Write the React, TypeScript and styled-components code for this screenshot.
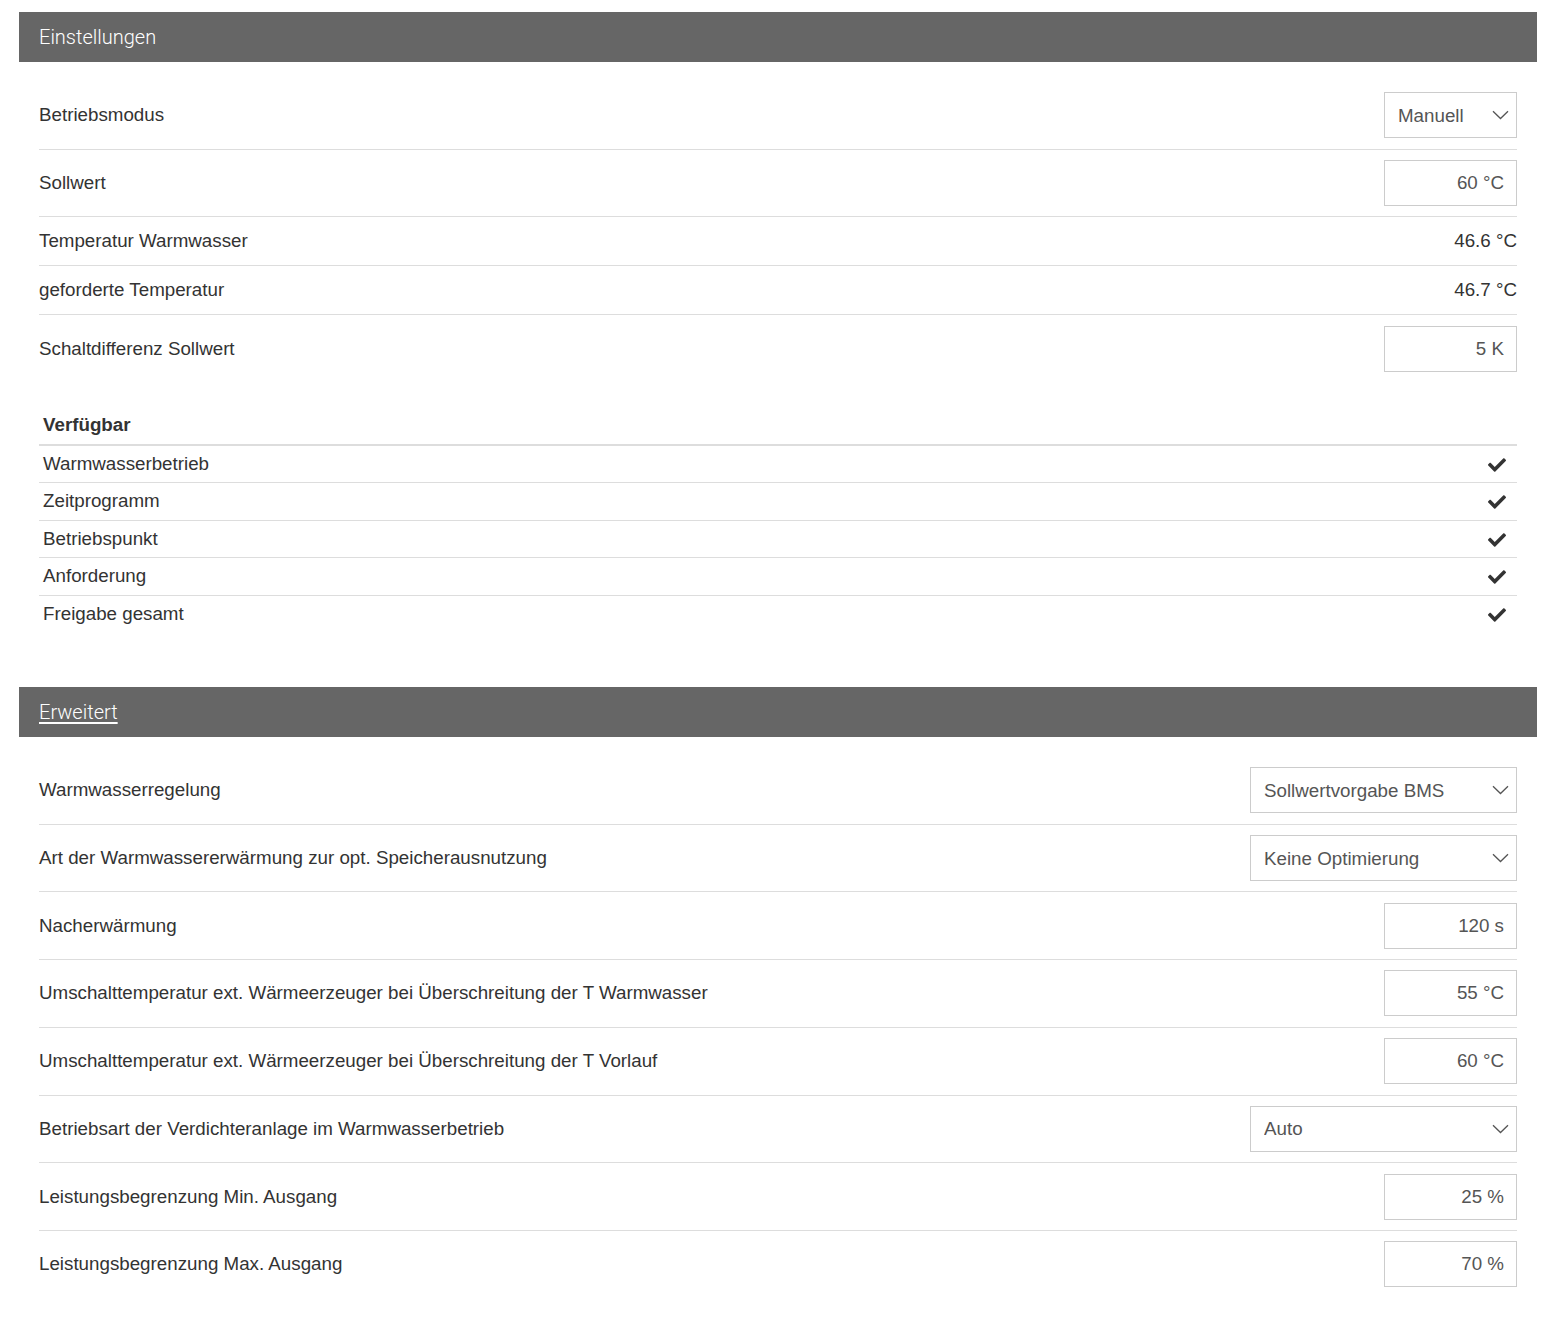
import React from "react";
import styled, { createGlobalStyle } from "styled-components";
import { FaCheck } from "react-icons/fa";

const GlobalStyle = createGlobalStyle`
  body {
    margin: 0;
    background: #fff;
    font-family: "Liberation Sans", Arial, sans-serif;
    color: #333;
  }
`;

const ScPage = styled.div`
  padding: 12px 17px 40px 19px;
`;

const ScSection = styled.section`
  display: block;
`;

const ScSectionHeader = styled.div`
  height: 50px;
  line-height: 50px;
  padding: 0 20px;
  background: #666;
  color: #fff;
  font-family: Roboto, "Liberation Sans", sans-serif;
  font-weight: 300;
  font-size: 20px;
`;

const ScHeaderLink = styled.a`
  color: #fff;
  text-decoration: underline;
  text-underline-offset: 3px;
  cursor: pointer;
`;

const ScBody = styled.div`
  padding: 20px 20px 0;
`;

const ScRow = styled.div<{ $plain?: boolean }>`
  display: flex;
  align-items: center;
  justify-content: space-between;
  padding: ${(p) => (p.$plain ? "12px 0" : "10.35px 0")};
  border-bottom: 1px solid #ddd;
  &:last-child {
    border-bottom: none;
  }
`;

const ScLabel = styled.span`
  font-size: 18.75px;
  line-height: 24px;
  color: #333;
`;

const ScValue = styled.span`
  font-size: 18.75px;
  line-height: 24px;
  color: #333;
`;

const ScInput = styled.input`
  box-sizing: border-box;
  width: 133px;
  height: 46px;
  border: 1px solid #ccc;
  border-radius: 0;
  padding: 0 12px;
  text-align: right;
  font-family: inherit;
  font-size: 18.75px;
  color: #555;
  background: #fff;
  outline: none;
`;

const ScSelectWrap = styled.div<{ $wide?: boolean }>`
  position: relative;
  width: ${(p) => (p.$wide ? 267 : 133)}px;
  height: 46px;
  svg {
    position: absolute;
    right: 8px;
    top: 18px;
    pointer-events: none;
  }
`;

const ScSelect = styled.select`
  box-sizing: border-box;
  width: 100%;
  height: 100%;
  appearance: none;
  border: 1px solid #ccc;
  border-radius: 0;
  padding: 0 36px 0 13px;
  font-family: inherit;
  font-size: 18.75px;
  color: #555;
  background: #fff;
  outline: none;
`;

const ScTable = styled.table`
  width: 100%;
  margin: 25px 0 55px;
  border-collapse: collapse;
  font-size: 18.75px;
  color: #333;
  th,
  td {
    padding: 6px 4px;
    line-height: 24.5px;
    text-align: left;
  }
  th {
    font-weight: bold;
    border-bottom: 2px solid #ddd;
  }
  td {
    border-top: 1px solid #ddd;
  }
  tbody tr:first-child td {
    border-top: none;
  }
`;

const ScCheckCell = styled.td`
  width: 40px;
  && {
    text-align: right;
    padding-right: 11px;
  }
  svg {
    display: inline-block;
    vertical-align: middle;
    color: #333;
  }
`;

const Chevron = () => (
  <svg width="17" height="10" viewBox="0 0 17 10" fill="none">
    <path d="M1 1.2 L8.5 8.5 L16 1.2" stroke="#555" strokeWidth="1.3" />
  </svg>
);

type Field =
  | { kind: "select"; label: string; value: string; wide?: boolean }
  | { kind: "input"; label: string; value: string }
  | { kind: "text"; label: string; value: string };

const settings: Field[] = [
  { kind: "select", label: "Betriebsmodus", value: "Manuell" },
  { kind: "input", label: "Sollwert", value: "60 °C" },
  { kind: "text", label: "Temperatur Warmwasser", value: "46.6 °C" },
  { kind: "text", label: "geforderte Temperatur", value: "46.7 °C" },
  { kind: "input", label: "Schaltdifferenz Sollwert", value: "5 K" },
];

const advanced: Field[] = [
  { kind: "select", label: "Warmwasserregelung", value: "Sollwertvorgabe BMS", wide: true },
  {
    kind: "select",
    label: "Art der Warmwassererwärmung zur opt. Speicherausnutzung",
    value: "Keine Optimierung",
    wide: true,
  },
  { kind: "input", label: "Nacherwärmung", value: "120 s" },
  {
    kind: "input",
    label: "Umschalttemperatur ext. Wärmeerzeuger bei Überschreitung der T Warmwasser",
    value: "55 °C",
  },
  {
    kind: "input",
    label: "Umschalttemperatur ext. Wärmeerzeuger bei Überschreitung der T Vorlauf",
    value: "60 °C",
  },
  {
    kind: "select",
    label: "Betriebsart der Verdichteranlage im Warmwasserbetrieb",
    value: "Auto",
    wide: true,
  },
  { kind: "input", label: "Leistungsbegrenzung Min. Ausgang", value: "25 %" },
  { kind: "input", label: "Leistungsbegrenzung Max. Ausgang", value: "70 %" },
];

const available = [
  "Warmwasserbetrieb",
  "Zeitprogramm",
  "Betriebspunkt",
  "Anforderung",
  "Freigabe gesamt",
];

const FieldRow = ({ field }: { field: Field }) => (
  <ScRow $plain={field.kind === "text"}>
    <ScLabel>{field.label}</ScLabel>
    {field.kind === "text" && <ScValue>{field.value}</ScValue>}
    {field.kind === "input" && <ScInput defaultValue={field.value} />}
    {field.kind === "select" && (
      <ScSelectWrap $wide={field.wide}>
        <ScSelect defaultValue={field.value}>
          <option>{field.value}</option>
        </ScSelect>
        <Chevron />
      </ScSelectWrap>
    )}
  </ScRow>
);

const App = () => (
  <>
    <GlobalStyle />
    <ScPage>
      <ScSection>
        <ScSectionHeader>Einstellungen</ScSectionHeader>
        <ScBody>
          <div>
            {settings.map((f) => (
              <FieldRow key={f.label} field={f} />
            ))}
          </div>
          <ScTable>
            <thead>
              <tr>
                <th>Verfügbar</th>
                <th />
              </tr>
            </thead>
            <tbody>
              {available.map((name) => (
                <tr key={name}>
                  <td>{name}</td>
                  <ScCheckCell>
                    <FaCheck size={18} />
                  </ScCheckCell>
                </tr>
              ))}
            </tbody>
          </ScTable>
        </ScBody>
      </ScSection>
      <ScSection>
        <ScSectionHeader>
          <ScHeaderLink>Erweitert</ScHeaderLink>
        </ScSectionHeader>
        <ScBody>
          {advanced.map((f) => (
            <FieldRow key={f.label} field={f} />
          ))}
        </ScBody>
      </ScSection>
    </ScPage>
  </>
);

export default App;
